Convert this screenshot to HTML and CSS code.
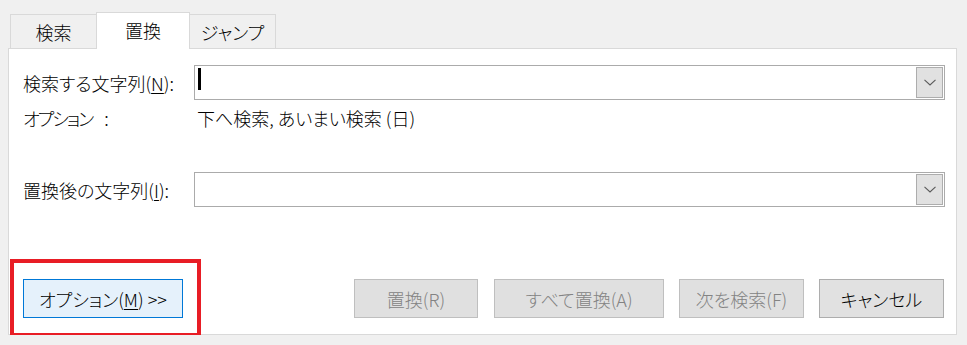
FILE: index.html
```html
<!DOCTYPE html>
<html lang="ja">
<head>
<meta charset="utf-8">
<title>検索と置換</title>
<link rel="stylesheet" href="styles.css">
</head>
<body>
<div class="dialog">
  <div class="tabs">
    <div class="tab">検索</div>
    <div class="tab tab-active">置換</div>
    <div class="tab">ジャンプ</div>
  </div>
  <div class="panel">
    <div class="form">
      <div class="label">検索する文字列(<u>N</u>):</div>
      <div class="combo">
        <div class="combo-field"><span class="caret"></span></div>
        <div class="combo-btn">
          <svg width="12" height="7" viewBox="0 0 12 7"><path d="M0.5 0.8 L6 6 L11.5 0.8" fill="none" stroke="#5a5a5a" stroke-width="1.1"/></svg>
        </div>
      </div>
      <div class="label opt-label"><span class="tight">オプション</span><span class="colon">:</span></div>
      <div class="opt-value">下へ検索, あいまい検索 (日)</div>
      <div class="label label-replace">置換後の文字列(<u>I</u>):</div>
      <div class="combo combo-replace">
        <div class="combo-field"></div>
        <div class="combo-btn">
          <svg width="12" height="7" viewBox="0 0 12 7"><path d="M0.5 0.8 L6 6 L11.5 0.8" fill="none" stroke="#5a5a5a" stroke-width="1.1"/></svg>
        </div>
      </div>
    </div>
    <div class="buttons">
      <button class="btn btn-options">オプション(<u>M</u>) &gt;&gt;</button>
      <div class="btn-group">
        <button class="btn btn-disabled btn-replace">置換(R)</button>
        <button class="btn btn-disabled btn-replace-all">すべて置換(A)</button>
        <button class="btn btn-disabled btn-next">次を検索(F)</button>
        <button class="btn btn-cancel">キャンセル</button>
      </div>
    </div>
    <div class="highlight"></div>
  </div>
</div>
</body>
</html>
```
FILE: styles.css
```css
* { box-sizing: border-box; }

body {
  margin: 0;
  background: #f0f0f0;
  font-family: "Noto Sans CJK JP", "Noto Sans", sans-serif;
  font-size: 18px;
  font-weight: 300;
  color: #000;
  font-feature-settings: "palt";
}

.dialog {
  padding-top: 12px;
}

.tabs {
  display: flex;
  align-items: flex-end;
  padding-left: 10px;
  height: 36px;
}

.tab {
  width: 87px;
  height: 34px;
  border: 1px solid #d9d9d9;
  border-bottom: 0;
  background: #f0f0f0;
  display: flex;
  align-items: center;
  justify-content: center;
  padding-top: 1px;
  line-height: 1;
}

.tab + .tab { margin-left: -1px; }

.tab-active {
  width: 94px;
  height: 37px;
  margin-bottom: -1px;
  background: #fff;
  position: relative;
  z-index: 1;
  padding-top: 0;
  padding-bottom: 2px;
}

.panel {
  position: relative;
  margin-left: 8px;
  width: 949px;
  height: 287px;
  background: #fff;
  border: 1px solid #d9d9d9;
  padding: 16px 11px 0 14px;
}

.form {
  display: grid;
  grid-template-columns: 171px 751px;
  align-items: center;
}

.label {
  white-space: nowrap;
}

.label u, .btn u { text-underline-offset: 2px; }

.tight { letter-spacing: -2px; }
.colon { margin-left: 12px; }

.combo {
  height: 35px;
  border: 1px solid #ababab;
  display: flex;
  background: #fff;
  padding: 1px;
}

.combo-field {
  flex: 1;
  position: relative;
}

.caret {
  position: absolute;
  left: 2px;
  top: 1px;
  width: 3px;
  height: 22px;
  background: #000;
}

.combo-btn {
  width: 27px;
  background: #e1e1e1;
  border: 1px solid #adadad;
  display: flex;
  align-items: center;
  justify-content: center;
}

.opt-label {
  margin-top: 6px;
  height: 24px;
  line-height: 24px;
}

.opt-value {
  margin-top: 6px;
  height: 24px;
  line-height: 24px;
  padding-left: 3px;
}

.label-replace { margin-top: 42px; }
.combo-replace { margin-top: 42px; }

.buttons {
  display: flex;
  justify-content: space-between;
  margin-top: 72px;
  padding-right: 1px;
}

.btn-group {
  display: flex;
  gap: 15px;
}

.btn {
  font-family: inherit;
  font-size: 18px;
  font-weight: 300;
  font-feature-settings: "palt";
  height: 39px;
  padding: 0;
  border: 1px solid #adadad;
  background: #e1e1e1;
  color: #000;
  display: flex;
  align-items: center;
  justify-content: center;
}

.btn-options {
  width: 160px;
  background: #e5f1fb;
  border-color: #0078d7;
}

.btn-disabled {
  color: #838383;
  background: #e0e0e0;
  border-color: #bfbfbf;
}

.btn-replace { width: 124px; margin-right: 1px; }
.btn-replace-all { width: 170px; }
.btn-next { width: 125px; }
.btn-cancel { width: 125px; }

.highlight {
  position: absolute;
  left: 1px;
  top: 210px;
  width: 191px;
  height: 78px;
  border: 4px solid #e81d25;
  pointer-events: none;
}
```
